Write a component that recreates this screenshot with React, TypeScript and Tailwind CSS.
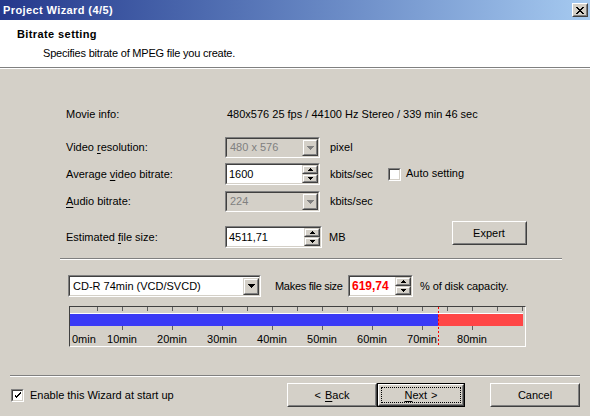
import React from "react";

type Kids = { children?: React.ReactNode; className?: string };

// Classic 3D borders
const Sunken = ({ children, className = "", inner = "" }: Kids & { inner?: string }) => (
  <div className={`border border-t-[#808080] border-l-[#808080] border-b-white border-r-white ${className}`}>
    <div className={`h-full w-full border border-t-[#404040] border-l-[#404040] border-b-[#d4d0c8] border-r-[#d4d0c8] ${inner}`}>
      {children}
    </div>
  </div>
);

const Raised = ({ children, className = "" }: Kids) => (
  <div className={`border border-t-[#d4d0c8] border-l-[#d4d0c8] border-b-[#404040] border-r-[#404040] bg-[#d4d0c8] ${className}`}>
    <div className="flex h-full w-full items-center justify-center border border-t-white border-l-white border-b-[#808080] border-r-[#808080]">
      {children}
    </div>
  </div>
);

const DownArrow = ({ color = "#000" }: { color?: string }) => (
  <svg width="7" height="4" shapeRendering="crispEdges">
    <rect x="0" y="0" width="7" height="1" fill={color} />
    <rect x="1" y="1" width="5" height="1" fill={color} />
    <rect x="2" y="2" width="3" height="1" fill={color} />
    <rect x="3" y="3" width="1" height="1" fill={color} />
  </svg>
);

const SmallArrow = ({ up }: { up?: boolean }) => (
  <svg width="5" height="3" shapeRendering="crispEdges" style={up ? { transform: "rotate(180deg)" } : undefined}>
    <rect x="0" y="0" width="5" height="1" fill="#000" />
    <rect x="1" y="1" width="3" height="1" fill="#000" />
    <rect x="2" y="2" width="1" height="1" fill="#000" />
  </svg>
);

const Combo = ({ value, disabled, className = "" }: { value: string; disabled?: boolean; className?: string }) => (
  <Sunken className={className} inner={`flex items-center ${disabled ? "bg-[#d4d0c8]" : "bg-white"}`}>
    <span className={`flex-1 pl-[3px] ${disabled ? "text-[#808080]" : "text-black"}`}>{value}</span>
    <Raised className="h-[17px] w-[16px]">
      <DownArrow color={disabled ? "#808080" : "#000"} />
    </Raised>
  </Sunken>
);

const Spin = ({ value, className = "", valueClass = "" }: { value: string; className?: string; valueClass?: string }) => (
  <Sunken className={className} inner="flex items-center bg-white">
    <span className={`flex-1 pl-[2px] ${valueClass}`}>{value}</span>
    <div className="flex h-full w-[16px] flex-col">
      <Raised className="h-1/2 w-full">
        <SmallArrow up />
      </Raised>
      <Raised className="h-1/2 w-full">
        <SmallArrow />
      </Raised>
    </div>
  </Sunken>
);

const Check = ({ checked }: { checked?: boolean }) => (
  <Sunken className="h-[13px] w-[13px] shrink-0" inner="flex items-center justify-center bg-white">
    {checked && (
      <svg width="7" height="7" shapeRendering="crispEdges">
        <path d="M0 2h1v3h1v1h1v-1h1v-1h1v-1h1v-1h1v-2h-1v1h-1v1h-1v1h-1v1h-1v-1h-1v-1h-1z" fill="#000" />
      </svg>
    )}
  </Sunken>
);

const PushButton = ({ children, className = "", isDefault }: Kids & { isDefault?: boolean }) => {
  const body = (
    <div className="h-full w-full border border-t-white border-l-white border-b-[#404040] border-r-[#404040]">
      <div className="flex h-full w-full items-center justify-center border border-t-[#d4d0c8] border-l-[#d4d0c8] border-b-[#808080] border-r-[#808080] bg-[#d4d0c8]">
        {isDefault ? (
          <div className="flex h-[16px] w-[80px] items-center justify-center border border-dotted border-black">{children}</div>
        ) : (
          children
        )}
      </div>
    </div>
  );
  return isDefault ? (
    <div className={`border border-black ${className}`}>{body}</div>
  ) : (
    <div className={className}>{body}</div>
  );
};

const U = ({ children }: Kids) => <span className="underline underline-offset-[2px]">{children}</span>;

// Disk capacity bar with minute ruler
const CapacityBar = () => {
  const top = Array.from({ length: 18 }, (_, i) => 2 + 25 * (i + 1));
  const bottom = Array.from({ length: 8 }, (_, i) => 2 + 50 * (i + 1));
  const labels = ["10min", "20min", "30min", "40min", "50min", "60min", "70min", "80min"];
  return (
    <div className="ml-[69px] mt-[9px] h-[41px] w-[457px] border border-t-[#404040] border-l-[#404040] border-b-white border-r-white">
      <svg width="455" height="39" className="block" fontFamily="'Liberation Sans', Arial, sans-serif" fontSize="11">
        {top.map((x) => (
          <line key={`t${x}`} x1={x + 0.5} x2={x + 0.5} y1={0} y2={4} stroke="#606060" />
        ))}
        <line x1={0} x2={453} y1={6.5} y2={6.5} stroke="#ffffff" />
        <rect x={0} y={7} width={368} height={12} fill="#3a3af6" />
        <rect x={368} y={7} width={85} height={12} fill="#ff4646" />
        {bottom.map((x) => (
          <line key={`b${x}`} x1={x + 0.5} x2={x + 0.5} y1={19} y2={23} stroke="#606060" />
        ))}
        <line x1={368.5} x2={368.5} y1={0} y2={39} stroke="#ff0000" strokeDasharray="2 2" />
        <text x={2} y={36} fill="#000">0min</text>
        {labels.map((l, i) => (
          <text key={l} x={bottom[i]} y={36} textAnchor="middle" fill="#000">
            {l}
          </text>
        ))}
      </svg>
    </div>
  );
};

export default function App() {
  return (
    <div
      className="flex h-[416px] w-[590px] flex-col overflow-hidden bg-[#d4d0c8] text-[11px] leading-[13px] text-black"
      style={{ fontFamily: "'Liberation Sans', Arial, sans-serif" }}
    >
      {/* Title bar */}
      <div className="flex h-[20px] shrink-0 items-center bg-linear-to-r from-[#26388c] to-[#a6caf0] pl-[3px] pr-[2px]">
        <span className="flex-1 font-bold tracking-[0.4px] text-white">Project Wizard (4/5)</span>
        <PushButton className="h-[14px] w-[16px]">
          <svg width="8" height="7" shapeRendering="crispEdges">
            <path d="M0 0h2v1h1v1h2v-1h1v-1h2v1h-1v1h-1v1h-1v1h1v1h1v1h1v1h-2v-1h-1v-1h-2v1h-1v1h-2v-1h1v-1h1v-1h1v-1h-1v-1h-1v-1h-1z" fill="#000" />
          </svg>
        </PushButton>
      </div>

      {/* Header */}
      <div className="h-[47px] shrink-0 bg-white">
        <div className="pl-[17px] pt-[8px] font-bold tracking-[0.4px]">Bitrate setting</div>
        <div className="mt-[6px] pl-[43px] tracking-[-0.2px]">Specifies bitrate of MPEG file you create.</div>
      </div>
      <div className="h-px shrink-0 bg-[#808080]" />
      <div className="h-px shrink-0 bg-white" />

      {/* Body */}
      <div className="flex h-[306px] shrink-0 flex-col">
        <div className="mt-[35px] flex h-[20px] items-center pl-[66px]">
          <span className="w-[161px]">Movie info:</span>
          <span>480x576 25 fps / 44100 Hz Stereo / 339 min 46 sec</span>
        </div>

        <div className="mt-[13px] flex h-[21px] items-center pl-[66px]">
          <span className="w-[159px]">
            Video <U>r</U>esolution:
          </span>
          <Combo value="480 x 576" disabled className="h-[21px] w-[95px]" />
          <span className="ml-[10px]">pixel</span>
        </div>

        <div className="mt-[5px] flex h-[22px] items-center pl-[66px]">
          <span className="w-[159px]">
            Average <U>v</U>ideo bitrate:
          </span>
          <Spin value="1600" className="h-[22px] w-[95px]" />
          <span className="ml-[10px] w-[58px]">kbits/sec</span>
          <Check />
          <span className="ml-[5px] -mt-[1px]">Auto setting</span>
        </div>

        <div className="mt-[6px] flex h-[21px] items-center pl-[66px]">
          <span className="w-[159px]">
            <U>A</U>udio bitrate:
          </span>
          <Combo value="224" disabled className="h-[21px] w-[95px]" />
          <span className="ml-[10px]">kbits/sec</span>
        </div>

        <div className="mt-[9px] flex h-[27px] items-start pl-[66px]">
          <div className="mt-[5px] flex h-[22px] items-center">
            <span className="w-[159px]">
              Estimated <U>f</U>ile size:
            </span>
            <Spin value="4511,71" className="h-[22px] w-[97px]" />
            <span className="ml-[7px]">MB</span>
          </div>
          <PushButton className="ml-[106px] h-[24px] w-[75px]">Expert</PushButton>
        </div>

        <div className="ml-[60px] mt-[10px] h-px w-[502px] bg-[#808080]" />
        <div className="ml-[60px] h-px w-[502px] bg-white" />

        <div className="mt-[15px] flex h-[22px] items-center pl-[68px]">
          <Combo value="CD-R 74min (VCD/SVCD)" className="h-[22px] w-[193px]" />
          <span className="ml-[14px] w-[73px] whitespace-nowrap tracking-[-0.3px]">Makes file size</span>
          <Spin value="619,74" className="h-[22px] w-[65px]" valueClass="font-bold text-[12px] text-[#ff0000]" />
          <span className="ml-[7px] tracking-[-0.1px]">% of disk capacity.</span>
        </div>

        <CapacityBar />
      </div>

      {/* Footer */}
      <div className="mx-[10px] h-px shrink-0 bg-[#808080]" />
      <div className="mx-[10px] h-px shrink-0 bg-white" />
      <div className="mt-[6px] flex h-[24px] items-center pl-[11px] pr-[10px]">
        <Check checked />
        <span className="ml-[6px] flex-1">Enable this Wizard at start up</span>
        <PushButton className="h-[24px] w-[90px]">
          &lt; <span className="ml-[4px]"><U>B</U>ack</span>
        </PushButton>
        <PushButton isDefault className="h-[24px] w-[88px]">
          <span><U>N</U>ext</span> <span className="ml-[4px]">&gt;</span>
        </PushButton>
        <PushButton className="ml-[25px] h-[24px] w-[90px]">Cancel</PushButton>
      </div>
    </div>
  );
}
